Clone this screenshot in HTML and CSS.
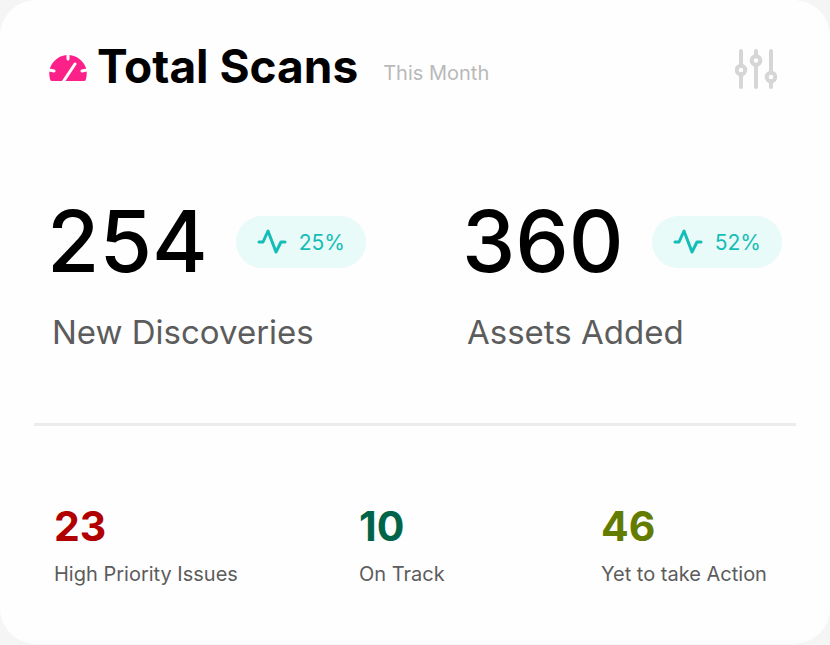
FILE: index.html
```html
<!DOCTYPE html>
<html lang="en">
<head>
    <meta charset="UTF-8">
    <meta name="viewport" content="width=device-width, initial-scale=1.0">
    <title>Total Scans</title>
    <link rel="stylesheet" href="styles.css">
</head>
<body>
    <main class="card">
        <header class="card-header">
            <svg class="gauge-icon" viewBox="0 0 38 28" aria-hidden="true">
                <path d="M3 27 A2 2 0 0 1 1 25 C0 21 0 18 1 14 A19 19 0 0 1 37 14 C38 18 38 21 37 25 A2 2 0 0 1 35 27 Z" fill="#fb2188"/>
                <path d="M19 0V5M0 16L5 17M38 16L33 17" stroke="#fff" stroke-width="3" stroke-linecap="round"/>
                <path d="M14 28L26 10" stroke="#fff" stroke-width="3" stroke-linecap="round"/>
            </svg>
            <h1>Total Scans</h1>
            <span class="period">This Month</span>
            <button class="filter-btn" type="button" aria-label="Filter">
                <svg viewBox="0 0 42 42" fill="none" stroke="#d6d6d6" stroke-width="4" stroke-linecap="round">
                    <path d="M6 3V17M6 27V39M21 3V8M21 18V39M36 3V24M36 34V39"/>
                    <circle cx="6" cy="22" r="4.3"/>
                    <circle cx="21" cy="12.5" r="4.3"/>
                    <circle cx="36" cy="29" r="4.3"/>
                </svg>
            </button>
        </header>

        <section class="stats">
            <div class="stat">
                <div class="stat-top">
                    <span class="stat-value">254</span>
                    <span class="badge">
                        <svg viewBox="0 0 30 26" aria-hidden="true"><path d="M2 13H6L11 2L19 23L24 13H28"/></svg>
                        25%
                    </span>
                </div>
                <p class="stat-label">New Discoveries</p>
            </div>
            <div class="stat">
                <div class="stat-top">
                    <span class="stat-value">360</span>
                    <span class="badge">
                        <svg viewBox="0 0 30 26" aria-hidden="true"><path d="M2 13H6L11 2L19 23L24 13H28"/></svg>
                        52%
                    </span>
                </div>
                <p class="stat-label">Assets Added</p>
            </div>
        </section>

        <hr class="divider">

        <section class="summary">
            <div class="summary-item high">
                <strong>23</strong>
                <p>High Priority Issues</p>
            </div>
            <div class="summary-item track">
                <strong>10</strong>
                <p>On Track</p>
            </div>
            <div class="summary-item pending">
                <strong>46</strong>
                <p>Yet to take Action</p>
            </div>
        </section>
    </main>
</body>
</html>
```
FILE: styles.css
```css
* {
    margin: 0;
    padding: 0;
    box-sizing: border-box;
}

body {
    font-family: Inter, "Liberation Sans", sans-serif;
    background: #f5f5f5;
    padding-bottom: 1px;
}

.card {
    background: #fefefe;
    border-radius: 36px;
    padding: 36px 34px 58px;
}

.card-header {
    display: flex;
    align-items: center;
    padding: 0 19px 0 15px;
}

.gauge-icon {
    width: 38px;
    height: 28px;
    margin: 4px 10px 0 0;
}

h1 {
    font-size: 46px;
    font-weight: 700;
    line-height: 60px;
    color: #000;
}

.period {
    margin: 14px 0 0 25px;
    font-size: 20px;
    line-height: 24px;
    color: #b9b9b9;
}

.filter-btn {
    width: 42px;
    height: 42px;
    margin: 6px 0 0 auto;
    border: none;
    background: none;
    cursor: pointer;
}

.filter-btn svg {
    display: block;
}

.stats {
    display: grid;
    grid-template-columns: 415fr 334fr;
    padding: 94px 0 0 13px;
}

.stat-top {
    display: flex;
    align-items: center;
    gap: 28px;
}

.stat-value {
    font-size: 85px;
    font-weight: 500;
    line-height: 104px;
    color: #000;
}

.badge {
    display: flex;
    align-items: center;
    gap: 12px;
    height: 52px;
    padding: 0 21px;
    border-radius: 26px;
    background: #e9fbf9;
    color: #14bdb5;
    font-size: 21px;
}

.badge svg {
    width: 30px;
    height: 26px;
    fill: none;
    stroke: currentColor;
    stroke-width: 3;
    stroke-linejoin: round;
    stroke-linecap: round;
}

.stat-label {
    margin-top: 18px;
    padding-left: 5px;
    font-size: 33px;
    font-weight: 400;
    line-height: 40px;
    color: #5c5c5c;
}

.divider {
    margin-top: 71px;
    height: 3px;
    border: none;
    background: #ececec;
}

.summary {
    display: grid;
    grid-template-columns: 305fr 242fr 195fr;
    padding: 76px 0 0 20px;
}

.summary-item strong {
    display: block;
    font-size: 41px;
    font-weight: 700;
    line-height: 48px;
}

.summary-item p {
    margin-top: 12px;
    font-size: 20px;
    line-height: 24px;
    color: #5c5c5c;
}

.high strong {
    color: #b00000;
}

.track strong {
    color: #006548;
}

.pending strong {
    color: #637c00;
}
```
